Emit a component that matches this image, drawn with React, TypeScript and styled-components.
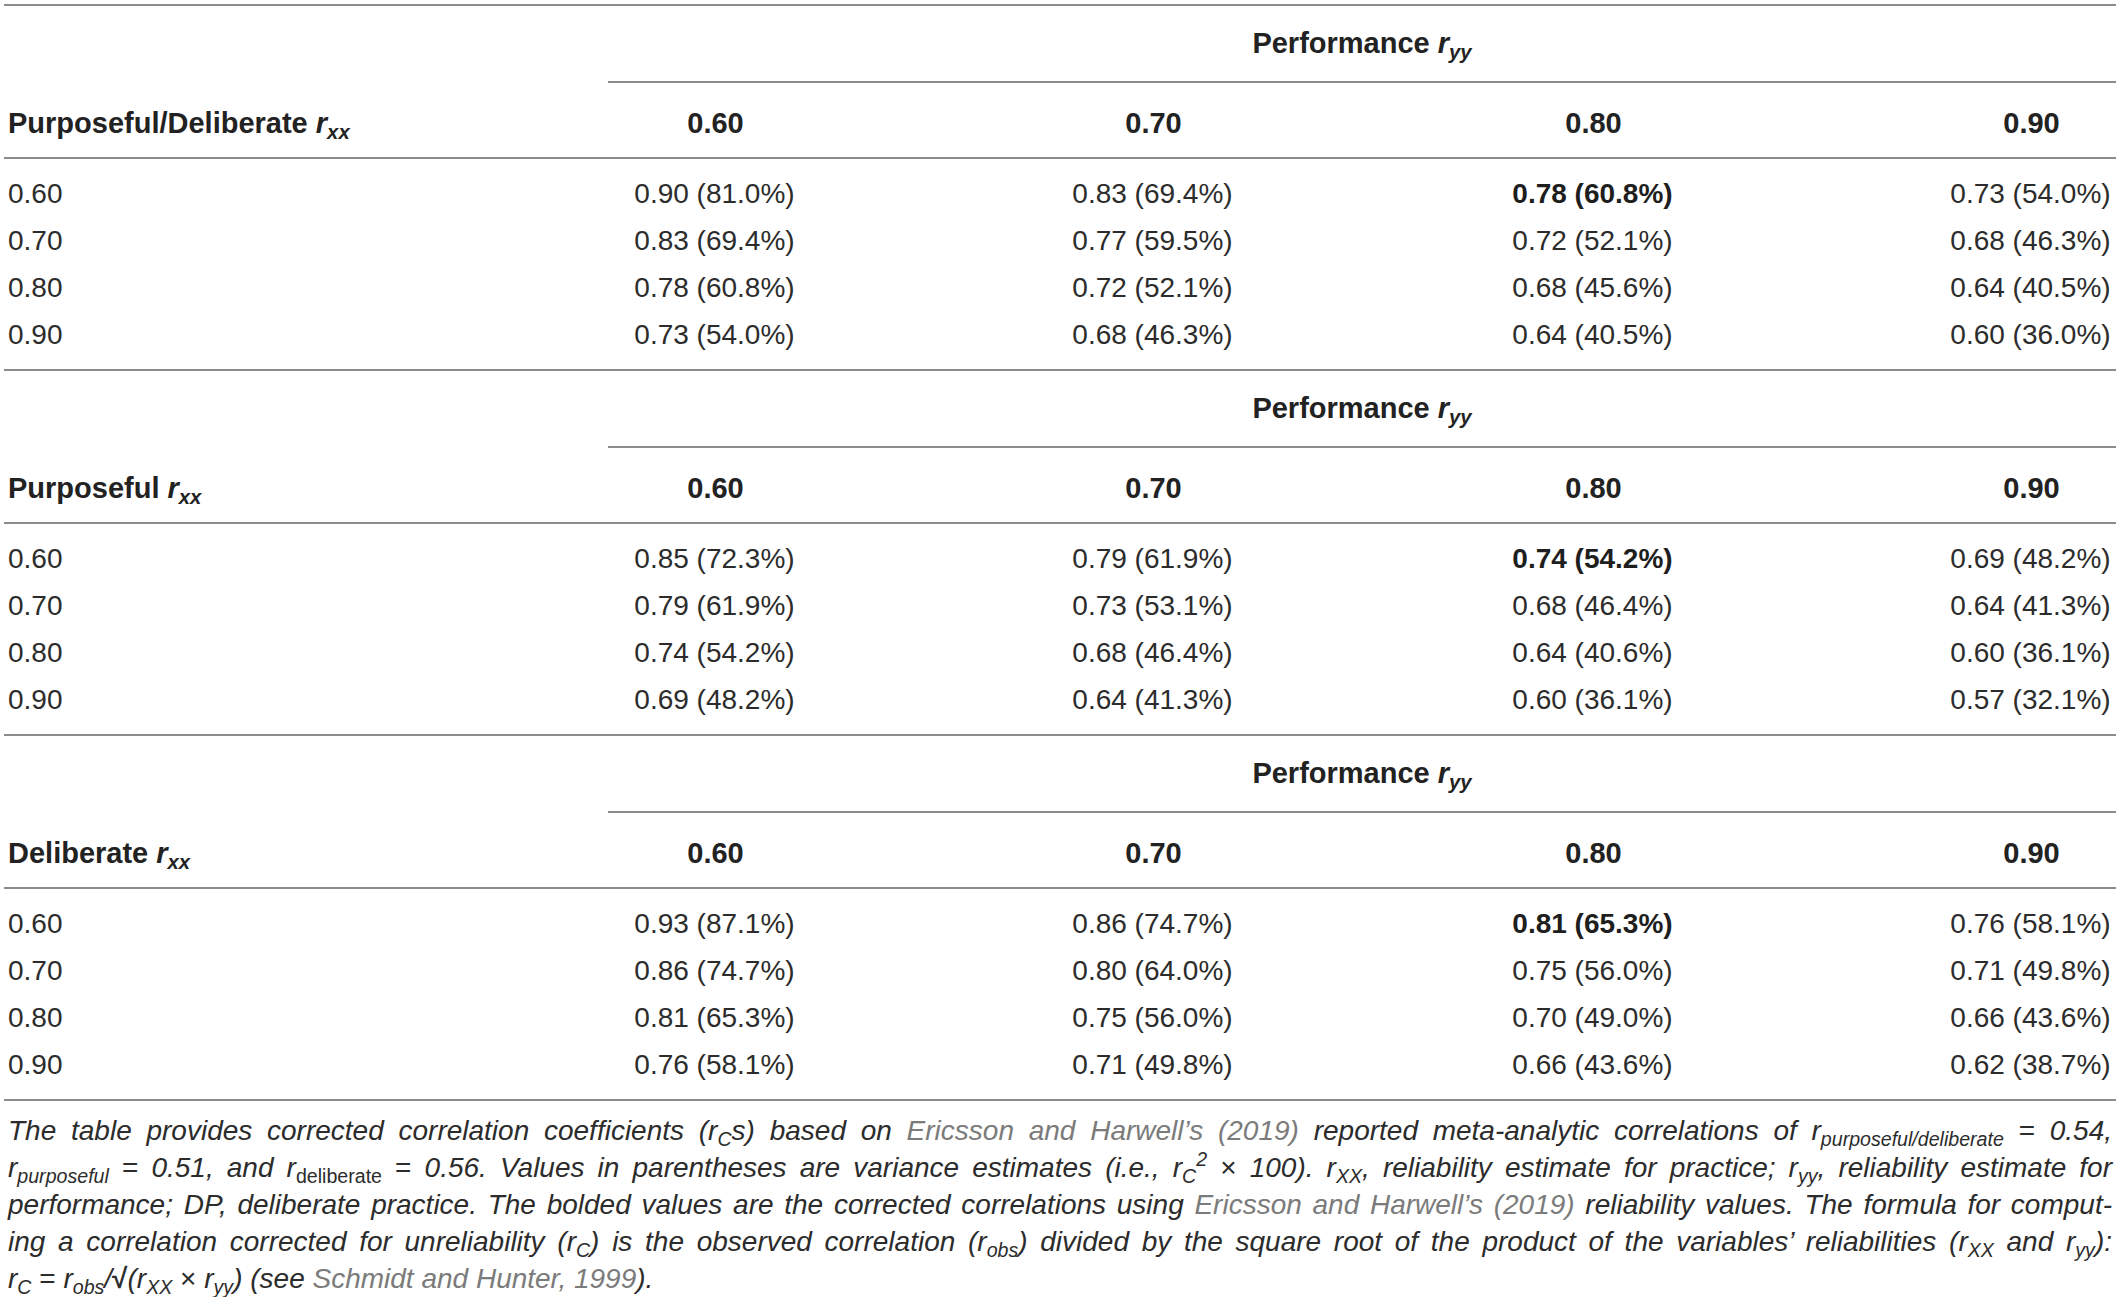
import React from "react"
import styled, { createGlobalStyle } from "styled-components"

type Section = {
    label: string
    rows: string[][]
}

const ryyLevels = ['0.60', '0.70', '0.80', '0.90']

const sections: Section[] = [
    {
        label: 'Purposeful/Deliberate',
        rows: [
            ['0.90 (81.0%)', '0.83 (69.4%)', '0.78 (60.8%)', '0.73 (54.0%)'],
            ['0.83 (69.4%)', '0.77 (59.5%)', '0.72 (52.1%)', '0.68 (46.3%)'],
            ['0.78 (60.8%)', '0.72 (52.1%)', '0.68 (45.6%)', '0.64 (40.5%)'],
            ['0.73 (54.0%)', '0.68 (46.3%)', '0.64 (40.5%)', '0.60 (36.0%)'],
        ],
    },
    {
        label: 'Purposeful',
        rows: [
            ['0.85 (72.3%)', '0.79 (61.9%)', '0.74 (54.2%)', '0.69 (48.2%)'],
            ['0.79 (61.9%)', '0.73 (53.1%)', '0.68 (46.4%)', '0.64 (41.3%)'],
            ['0.74 (54.2%)', '0.68 (46.4%)', '0.64 (40.6%)', '0.60 (36.1%)'],
            ['0.69 (48.2%)', '0.64 (41.3%)', '0.60 (36.1%)', '0.57 (32.1%)'],
        ],
    },
    {
        label: 'Deliberate',
        rows: [
            ['0.93 (87.1%)', '0.86 (74.7%)', '0.81 (65.3%)', '0.76 (58.1%)'],
            ['0.86 (74.7%)', '0.80 (64.0%)', '0.75 (56.0%)', '0.71 (49.8%)'],
            ['0.81 (65.3%)', '0.75 (56.0%)', '0.70 (49.0%)', '0.66 (43.6%)'],
            ['0.76 (58.1%)', '0.71 (49.8%)', '0.66 (43.6%)', '0.62 (38.7%)'],
        ],
    },
]

const lineColor = '#8c8c8c'

const GlobalStyle = createGlobalStyle`
    body {
        margin: 0;
        background: #fff;
        color: #222;
        font-family: "Liberation Sans", Arial, sans-serif;
    }
`

const Page = styled.div`
    width: 2112px;
    padding: 0 4px;
`

const Table = styled.div`
    margin-top: 4px;
    border-bottom: 2px solid ${lineColor};
`

const Block = styled.div`
    display: grid;
    grid-template-columns: 604px 192px 438px 440px 438px;
    border-top: 2px solid ${lineColor};
`

const SpanHead = styled.div`
    grid-column: 2 / 6;
    height: 75px;
    display: flex;
    align-items: center;
    justify-content: center;
    border-bottom: 2px solid ${lineColor};
    font-size: 29px;
    font-weight: 700;
`

const HeadCell = styled.div<{ $first?: boolean }>`
    height: 68px;
    padding-top: 6px;
    display: flex;
    align-items: center;
    justify-content: ${p => (p.$first ? 'flex-start' : 'flex-end')};
    padding-left: ${p => (p.$first ? '4px' : '0')};
    padding-right: ${p => (p.$first ? '0' : '4px')};
    border-bottom: 2px solid ${lineColor};
    font-size: 29px;
    font-weight: 700;
    grid-column: ${p => (p.$first ? '1 / 2' : 'auto')};
`

const Body = styled.div`
    grid-column: 1 / 6;
    display: grid;
    grid-template-columns: subgrid;
    padding: 11px 0;
`

const Cell = styled.div<{ $first?: boolean; $bold?: boolean }>`
    height: 47px;
    display: flex;
    align-items: center;
    justify-content: ${p => (p.$first ? 'flex-start' : 'flex-end')};
    padding-left: ${p => (p.$first ? '4px' : '0')};
    padding-right: ${p => (p.$first ? '0' : '5px')};
    font-size: 28px;
    font-weight: ${p => (p.$bold ? 700 : 400)};
    color: ${p => (p.$bold ? '#1e1e1e' : '#2c2c2c')};
`

const Value = styled.span`
    display: inline-block;
    min-width: 161px;
    text-align: center;
    white-space: nowrap;
`

const Sub = styled.sub<{ $upright?: boolean }>`
    font-size: 0.7em;
    vertical-align: -0.32em;
    line-height: 0;
    font-style: ${p => (p.$upright ? 'normal' : 'inherit')};
`

const Sup = styled.sup`
    font-size: 0.7em;
    vertical-align: 0.55em;
    line-height: 0;
`

const Ital = styled.i`
    font-style: italic;
`

const Note = styled.div`
    padding-top: 11px;
    font-size: 28px;
    font-style: italic;
    line-height: 37px;
    color: #2c2c2c;
`

const NoteLine = styled.div<{ $last?: boolean }>`
    white-space: nowrap;
    text-align: ${p => (p.$last ? 'left' : 'justify')};
    text-align-last: ${p => (p.$last ? 'left' : 'justify')};
    padding: 0 4px;
`

const Ref = styled.span`
    color: #7b7b7b;
`

const Upright = styled.span`
    font-style: normal;
`

const Root = styled.span`
    font-style: normal;
    font-weight: 700;
`

const R: React.FC<{ s: string; upright?: boolean }> = ({ s, upright }) => (
    <>r<Sub $upright={upright}>{s}</Sub></>
)

const SectionTable: React.FC<{ section: Section }> = ({ section }) => (
    <Block>
        <SpanHead>Performance&nbsp;<Ital>r<Sub>yy</Sub></Ital></SpanHead>
        <HeadCell $first>{section.label}&nbsp;<Ital>r<Sub>xx</Sub></Ital></HeadCell>
        {ryyLevels.map(l => (
            <HeadCell key={l}><Value>{l}</Value></HeadCell>
        ))}
        <Body>
            {section.rows.map((row, i) => (
                <React.Fragment key={i}>
                    <Cell $first>{ryyLevels[i]}</Cell>
                    {row.map((v, j) => (
                        <Cell key={j} $bold={i === 0 && j === 2}><Value>{v}</Value></Cell>
                    ))}
                </React.Fragment>
            ))}
        </Body>
    </Block>
)

const App: React.FC = (): JSX.Element => {
    return (
        <Page>
            <GlobalStyle />
            <Table>
                {sections.map(s => <SectionTable key={s.label} section={s} />)}
            </Table>
            <Note>
                <NoteLine>
                    The table provides corrected correlation coefficients (<R s="C" />s) based on <Ref>Ericsson and Harwell’s (2019)</Ref> reported meta-analytic correlations of <R s="purposeful/deliberate" /> <Upright>=</Upright> 0.54,
                </NoteLine>
                <NoteLine>
                    <R s="purposeful" /> <Upright>=</Upright> 0.51, and <R s="deliberate" upright /> <Upright>=</Upright> 0.56. Values in parentheses are variance estimates (i.e., r<Sub>C</Sub><Sup>2</Sup> <Upright>×</Upright> 100). <R s="XX" />, reliability estimate for practice; <R s="yy" />, reliability estimate for
                </NoteLine>
                <NoteLine>
                    performance; DP, deliberate practice. The bolded values are the corrected correlations using <Ref>Ericsson and Harwell’s (2019)</Ref> reliability values. The formula for comput-
                </NoteLine>
                <NoteLine>
                    ing a correlation corrected for unreliability (<R s="C" />) is the observed correlation (<R s="obs" />) divided by the square root of the product of the variables’ reliabilities (<R s="XX" /> and <R s="yy" />):
                </NoteLine>
                <NoteLine $last>
                    <R s="C" /> <Upright>=</Upright> <R s="obs" />/<Root>√</Root>(<R s="XX" /> <Upright>×</Upright> <R s="yy" />) (see <Ref>Schmidt and Hunter, 1999</Ref>).
                </NoteLine>
            </Note>
        </Page>
    )
}

export default App
